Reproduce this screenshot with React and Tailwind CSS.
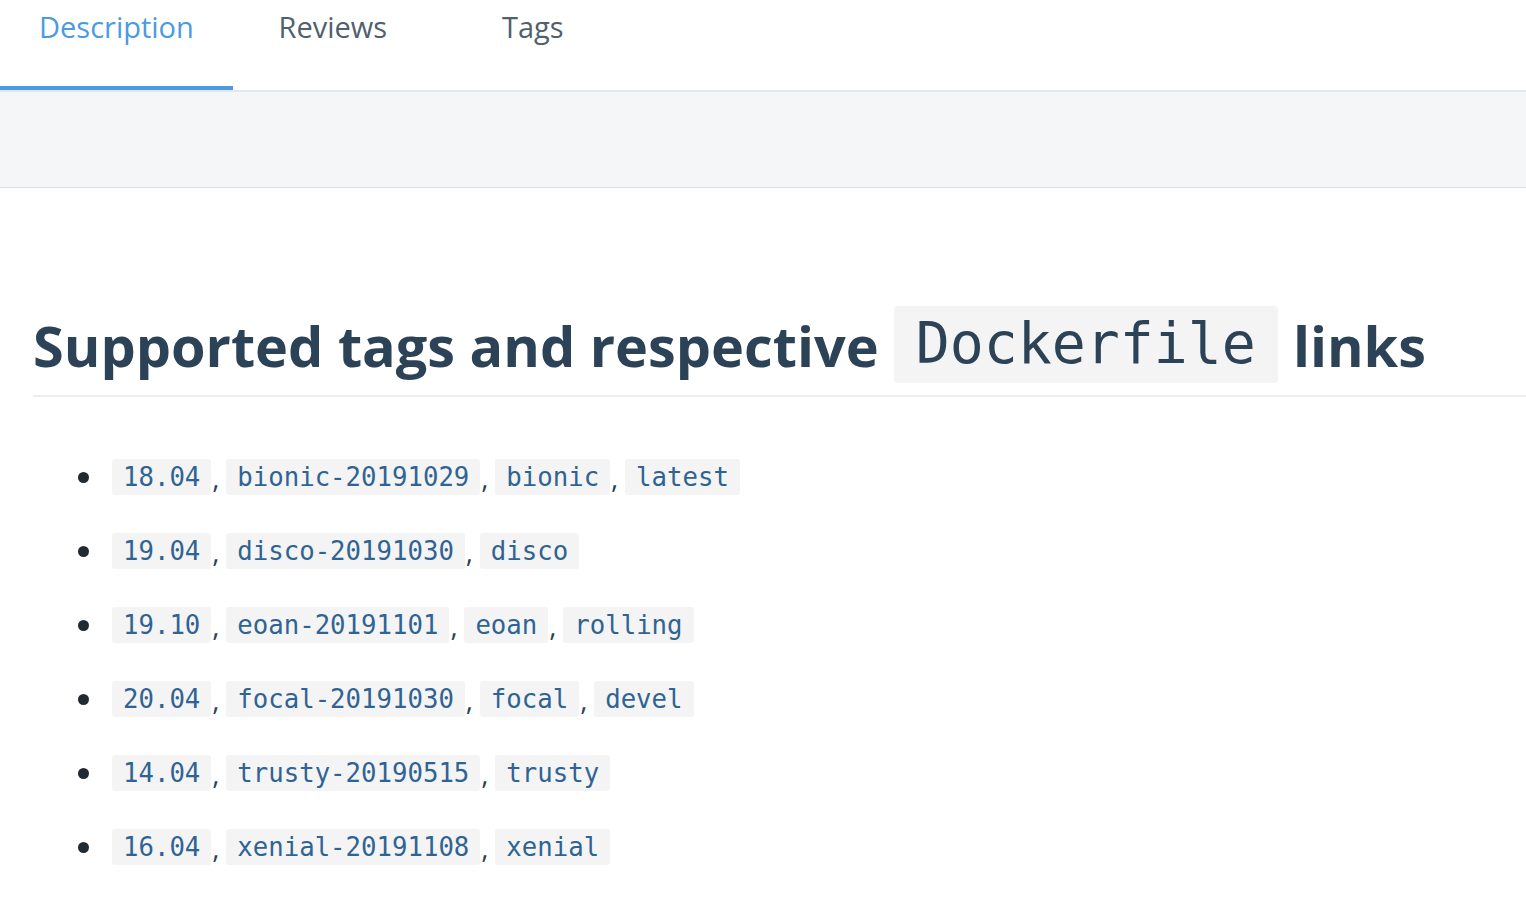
const tagRows = [
  ['18.04', 'bionic-20191029', 'bionic', 'latest'],
  ['19.04', 'disco-20191030', 'disco'],
  ['19.10', 'eoan-20191101', 'eoan', 'rolling'],
  ['20.04', 'focal-20191030', 'focal', 'devel'],
  ['14.04', 'trusty-20190515', 'trusty'],
  ['16.04', 'xenial-20191108', 'xenial'],
];

const tabs = ['Description', 'Reviews', 'Tags'];

const mono = "font-['DejaVu_Sans_Mono','Liberation_Mono',monospace]";

const App = () => {
  return (
    <div className="min-h-screen bg-white font-['Open_Sans','Liberation_Sans',sans-serif] text-[#2c4357]">
      {/* Tabs */}
      <div className="flex border-b-2 border-[#e3e6ea]">
        {tabs.map((tab, i) => (
          <div
            key={tab}
            className={
              i === 0
                ? 'h-[90px] min-w-[200px] px-[39px] pt-[7px] text-center text-[29px] leading-[40px] text-[#4a9be2] border-b-4 border-[#4a9be2]'
                : 'h-[90px] min-w-[200px] px-[39px] pt-[7px] text-center text-[29px] leading-[40px] text-[#515f6f]'
            }
          >
            {tab}
          </div>
        ))}
      </div>

      {/* Grey band */}
      <div className="h-[96px] bg-[#f5f6f7] border-b border-[#dde0e4]"></div>

      {/* Readme */}
      <div className="pl-[33px] pt-[118px]">
        <div className="flex items-center gap-[15px] pb-[12px] border-b-2 border-[#eceef0] whitespace-nowrap">
          <h1 className="text-[55.8px] font-bold leading-[64px]">
            Supported tags and respective
          </h1>
          <code
            className={`${mono} h-[77px] flex items-center px-[22px] bg-[#f4f4f4] rounded-[4px] text-[56.5px] text-[#2c4357]`}
          >
            Dockerfile
          </code>
          <span className="text-[55.8px] font-bold leading-[64px]">links</span>
        </div>

        <ul className="mt-[43px]">
          {tagRows.map((row) => (
            <li key={row[0]} className="h-[74px] flex items-center">
              <span className="ml-[45px] mr-[23px] w-[11px] h-[11px] rounded-full bg-[#1f2a33]"></span>
              {row.map((tag, j) => (
                <span key={tag} className="flex items-center">
                  <code
                    className={`${mono} h-[36px] flex items-center px-[11px] bg-[#f4f4f4] rounded-[3px] text-[25.7px] text-[#2f6393]`}
                  >
                    {tag}
                  </code>
                  {j < row.length - 1 && (
                    <span className="w-[15px] pl-[1px] text-[28px] leading-[36px] text-[#2c4357]">,</span>
                  )}
                </span>
              ))}
            </li>
          ))}
        </ul>
      </div>
    </div>
  );
};

export default App;
